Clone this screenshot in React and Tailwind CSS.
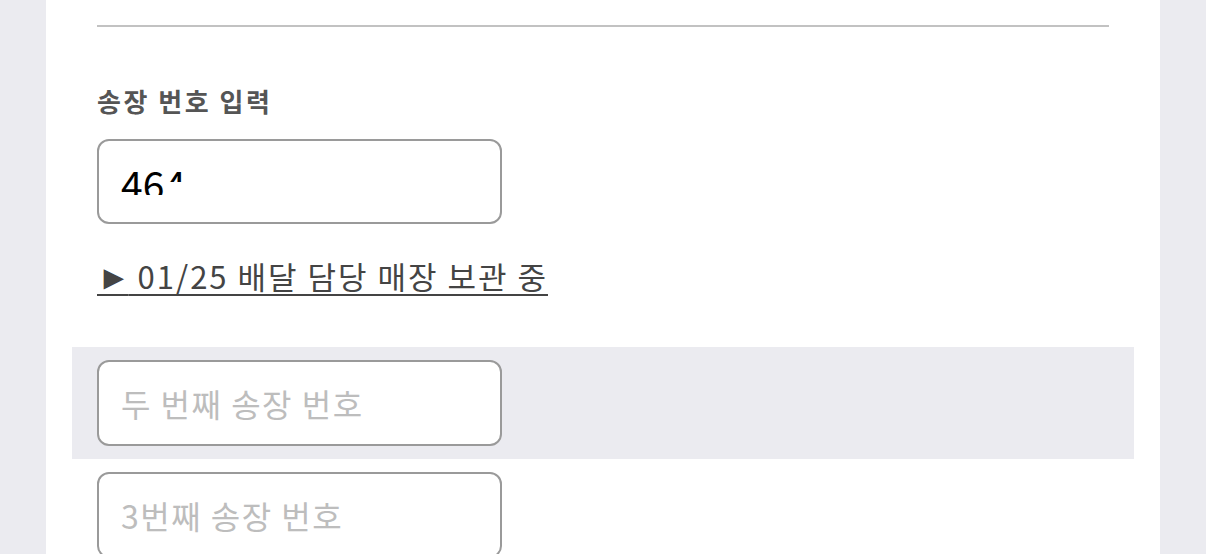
import React from 'react';

const font = { fontFamily: '"Noto Sans CJK KR", "Noto Sans", sans-serif' };

const InvoiceInput = ({ placeholder }) => (
  <div className="shrink-0 w-[405px] h-[86px] rounded-[12px] border-2 border-[#9a9a9a] bg-white flex items-center px-[22px]">
    <span className="text-[32px] leading-[40px] text-[#bdbdbd] tracking-[1.5px]">{placeholder}</span>
  </div>
);

export default function App() {
  return (
    <div className="h-[554px] overflow-hidden bg-[#ebebf0] flex" style={font}>
      <div className="ml-[46px] w-[1114px] bg-white flex flex-col">
        {/* divider */}
        <div className="shrink-0 mx-[51px] mt-[25px] h-[2px] bg-[#c2c2c2]" />

        <h2 className="shrink-0 mt-[56px] ml-[51px] text-[26px] leading-[36px] font-bold text-[#555555] tracking-[2.5px]">
          송장 번호 입력
        </h2>

        {/* first input, value partially hidden */}
        <div className="shrink-0 mt-[20px] ml-[51px] w-[405px] h-[85px] rounded-[12px] border-2 border-[#9a9a9a] bg-white flex items-start px-[22px] pt-[22px]">
          <span className="h-[32px] overflow-hidden text-[39px] leading-[40px] text-black">46</span>
          <span className="h-[19px] overflow-hidden text-[39px] leading-[40px] text-black">4</span>
          <span className="ml-[8px] mt-[16px] h-[6px] overflow-hidden text-[35px] leading-[8px] text-black">,</span>
        </div>

        <a className="shrink-0 mt-[31px] ml-[51px] w-fit text-[31px] leading-[40px] text-[#444444] underline underline-offset-[5px] decoration-[2px] tracking-[2px] cursor-pointer">
          <span className="text-[34px] tracking-[-2px]">►</span> 01/25 배달 담당 매장 보관 중
        </a>

        <div className="shrink-0 mt-[51px] mx-[26px] py-[13px] bg-[#ebebf0] flex items-center pl-[25px]">
          <InvoiceInput placeholder="두 번째 송장 번호" />
        </div>

        <div className="shrink-0 mt-[13px] ml-[51px]">
          <InvoiceInput placeholder="3번째 송장 번호" />
        </div>
      </div>
    </div>
  );
}
